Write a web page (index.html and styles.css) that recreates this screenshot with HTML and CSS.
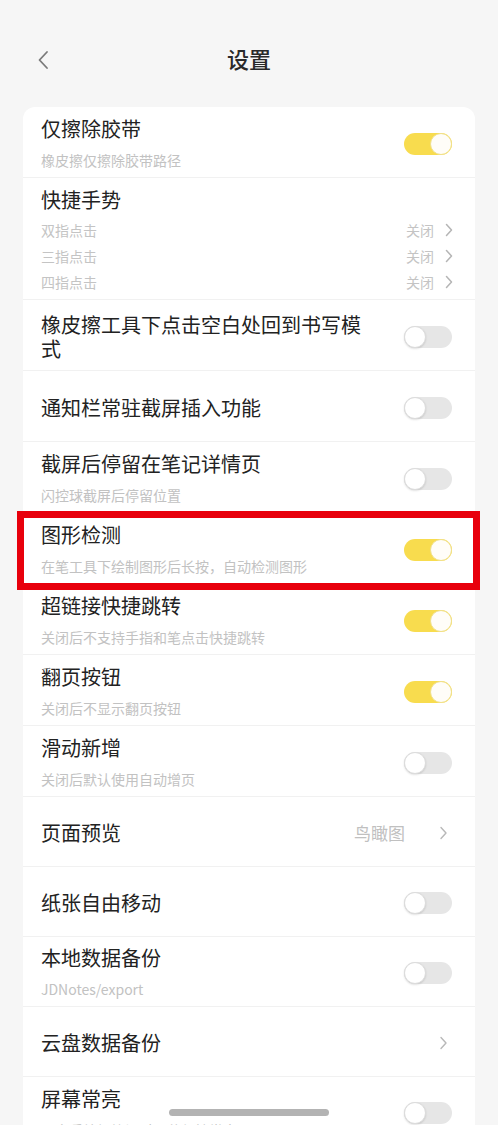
FILE: index.html
```html
<!DOCTYPE html>
<html lang="zh-CN">
<head>
<meta charset="utf-8">
<title>设置</title>
<link rel="stylesheet" href="styles.css">
</head>
<body>
<div class="page">
  <header class="header">
    <span class="back">
      <svg width="12" height="20" viewBox="0 0 12 20"><path d="M10 2 L2.5 10 L10 18" fill="none" stroke="#7a7a7a" stroke-width="1.8" stroke-linecap="round" stroke-linejoin="round"/></svg>
    </span>
    <h1 class="title">设置</h1>
  </header>

  <section class="card">
    <div class="row">
      <div class="text"><div class="name">仅擦除胶带</div><div class="desc">橡皮擦仅擦除胶带路径</div></div>
      <span class="toggle on"><span class="knob"></span></span>
    </div>

    <div class="row group">
      <div class="name">快捷手势</div>
      <div class="sub"><span class="sub-name">双指点击</span><span class="sub-val">关闭</span><svg class="chev" width="10" height="14" viewBox="0 0 10 14"><path d="M2.5 1.5 L7.5 7 L2.5 12.5" fill="none" stroke="#b5b5b5" stroke-width="1.5" stroke-linecap="round" stroke-linejoin="round"/></svg></div>
      <div class="sub"><span class="sub-name">三指点击</span><span class="sub-val">关闭</span><svg class="chev" width="10" height="14" viewBox="0 0 10 14"><path d="M2.5 1.5 L7.5 7 L2.5 12.5" fill="none" stroke="#b5b5b5" stroke-width="1.5" stroke-linecap="round" stroke-linejoin="round"/></svg></div>
      <div class="sub"><span class="sub-name">四指点击</span><span class="sub-val">关闭</span><svg class="chev" width="10" height="14" viewBox="0 0 10 14"><path d="M2.5 1.5 L7.5 7 L2.5 12.5" fill="none" stroke="#b5b5b5" stroke-width="1.5" stroke-linecap="round" stroke-linejoin="round"/></svg></div>
    </div>

    <div class="row">
      <div class="text"><div class="name">橡皮擦工具下点击空白处回到书写模式</div></div>
      <span class="toggle"><span class="knob"></span></span>
    </div>

    <div class="row">
      <div class="text"><div class="name">通知栏常驻截屏插入功能</div></div>
      <span class="toggle"><span class="knob"></span></span>
    </div>

    <div class="row">
      <div class="text"><div class="name">截屏后停留在笔记详情页</div><div class="desc">闪控球截屏后停留位置</div></div>
      <span class="toggle"><span class="knob"></span></span>
    </div>

    <div class="row highlight">
      <div class="text"><div class="name">图形检测</div><div class="desc">在笔工具下绘制图形后长按，自动检测图形</div></div>
      <span class="toggle on"><span class="knob"></span></span>
    </div>

    <div class="row">
      <div class="text"><div class="name">超链接快捷跳转</div><div class="desc">关闭后不支持手指和笔点击快捷跳转</div></div>
      <span class="toggle on"><span class="knob"></span></span>
    </div>

    <div class="row">
      <div class="text"><div class="name">翻页按钮</div><div class="desc">关闭后不显示翻页按钮</div></div>
      <span class="toggle on"><span class="knob"></span></span>
    </div>

    <div class="row">
      <div class="text"><div class="name">滑动新增</div><div class="desc">关闭后默认使用自动增页</div></div>
      <span class="toggle"><span class="knob"></span></span>
    </div>

    <div class="row tight">
      <div class="text"><div class="name">页面预览</div></div>
      <span class="value">鸟瞰图</span>
      <svg class="chev-lg" width="12" height="16" viewBox="0 0 12 16"><path d="M3 2.5 L8 8 L3 13.5" fill="none" stroke="#b8b8b8" stroke-width="1.4" stroke-linecap="round" stroke-linejoin="round"/></svg>
    </div>

    <div class="row tight">
      <div class="text"><div class="name">纸张自由移动</div></div>
      <span class="toggle"><span class="knob"></span></span>
    </div>

    <div class="row tight">
      <div class="text"><div class="name">本地数据备份</div><div class="desc">JDNotes/export</div></div>
      <span class="toggle"><span class="knob"></span></span>
    </div>

    <div class="row tight">
      <div class="text"><div class="name">云盘数据备份</div></div>
      <svg class="chev-lg" width="12" height="16" viewBox="0 0 12 16"><path d="M3 2.5 L8 8 L3 13.5" fill="none" stroke="#b8b8b8" stroke-width="1.4" stroke-linecap="round" stroke-linejoin="round"/></svg>
    </div>

    <div class="row tight">
      <div class="text"><div class="name">屏幕常亮</div><div class="desc">开启后编辑笔记时屏幕保持常亮</div></div>
      <span class="toggle"><span class="knob"></span></span>
    </div>
  </section>

  <div class="home-bar"></div>
</div>
</body>
</html>
```

FILE: styles.css
```css
html, body {
  margin: 0;
  padding: 0;
  background: #f6f6f6;
}

body {
  font-family: "Noto Sans CJK SC", "Noto Sans", sans-serif;
  color: #222;
}

.page {
  width: 498px;
  height: 1125px;
  overflow: hidden;
  position: relative;
}

.header {
  position: relative;
  height: 40px;
  padding-top: 38px;
  padding-bottom: 2px;
  display: flex;
  align-items: center;
  justify-content: center;
}

.back {
  position: absolute;
  left: 37px;
  top: 50px;
  width: 12px;
  height: 20px;
}

.back svg {
  display: block;
}

.title {
  margin: 0;
  font-size: 22px;
  font-weight: 500;
  line-height: 40px;
  color: #2a2a2a;
}

.card {
  margin: 27px 23px 0;
  background: #ffffff;
  border-radius: 12px;
}

.row {
  position: relative;
  display: flex;
  align-items: center;
  box-sizing: border-box;
  min-height: 71px;
  padding: 3px 23px 0 18px;
  border-bottom: 1px solid #f1f1f1;
}

.row.tight {
  min-height: 70px;
  padding-top: 2px;
}

.row:last-child {
  border-bottom: none;
}

.text {
  flex: 1;
  min-width: 0;
  margin-right: 34px;
}

.name {
  font-size: 20px;
  line-height: 24px;
  color: #222;
}

.desc {
  margin-top: 9px;
  font-size: 14px;
  line-height: 20px;
  color: #c2c2c2;
}

.group {
  display: block;
  padding: 10px 21px 4px 18px;
}

.sub {
  display: flex;
  align-items: center;
  height: 26px;
}

.group .name {
  margin-bottom: 5px;
}

.sub-name {
  flex: 1;
  font-size: 14px;
  color: #c4c4c4;
}

.sub-val {
  font-size: 14px;
  color: #c4c4c4;
  margin-right: 10px;
}

.chev {
  display: block;
}

.value {
  font-size: 17px;
  color: #c0c0c0;
  margin-right: 33px;
}

.chev-lg {
  display: block;
  margin-right: 2px;
}

.toggle {
  position: relative;
  flex: none;
  width: 48px;
  height: 22px;
  border-radius: 11px;
  background: #e6e6e6;
}

.toggle .knob {
  position: absolute;
  top: 0;
  left: 0;
  box-sizing: border-box;
  width: 22px;
  height: 22px;
  border-radius: 50%;
  background: #ffffff;
  border: 1px solid #dcdcdc;
  box-shadow: 0 1px 2px rgba(0, 0, 0, 0.12);
}

.toggle.on {
  background: #f8dc4e;
}

.toggle.on .knob {
  left: auto;
  right: 0;
  border-color: #f0e08a;
  box-shadow: none;
  background: #fffdf8;
}

.highlight::after {
  content: "";
  position: absolute;
  left: -6px;
  right: -5px;
  top: -2px;
  bottom: -7px;
  border: 7px solid #e8000c;
  pointer-events: none;
}

.home-bar {
  position: absolute;
  left: 169px;
  top: 1109px;
  width: 160px;
  height: 7px;
  border-radius: 4px;
  background: #b3b3b3;
}
```
